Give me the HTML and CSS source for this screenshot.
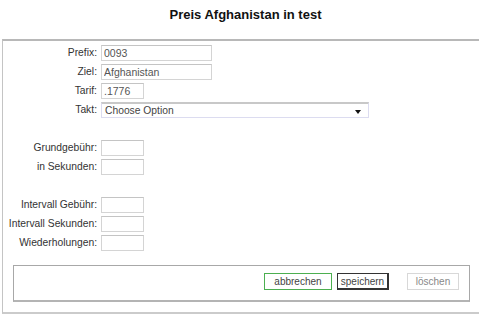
FILE: index.html
```html
<!DOCTYPE html>
<html lang="de">
<head>
    <meta charset="UTF-8">
    <title>Preis Afghanistan in test</title>
    <link rel="stylesheet" href="styles.css">
</head>
<body>

    <h1 class="page-title">Preis Afghanistan in test</h1>

    <!-- Preis Formular -->
    <div class="panel">
        <div class="form-grid">
            <label>Prefix:</label>
            <input class="inp inp-long" type="text" value="0093">
            <label>Ziel:</label>
            <input class="inp inp-long" type="text" value="Afghanistan">
            <label>Tarif:</label>
            <input class="inp inp-short" type="text" value=".1776">
            <label>Takt:</label>
            <div class="select-box">
                <span>Choose Option</span>
                <span class="arrow"></span>
            </div>
        </div>

        <div class="form-grid group">
            <label>Grundgebühr:</label>
            <input class="inp inp-short" type="text">
            <label>in Sekunden:</label>
            <input class="inp inp-short" type="text">
        </div>

        <div class="form-grid group">
            <label>Intervall Gebühr:</label>
            <input class="inp inp-short" type="text">
            <label>Intervall Sekunden:</label>
            <input class="inp inp-short" type="text">
            <label>Wiederholungen:</label>
            <input class="inp inp-short" type="text">
        </div>

        <div class="button-bar">
            <button class="btn btn-cancel">abbrechen</button>
            <button class="btn btn-save">speichern</button>
            <button class="btn btn-delete">löschen</button>
        </div>
    </div>

</body>
</html>
```

FILE: styles.css
```css
/* Styling */
body {
    font-family: "Liberation Sans", Arial, sans-serif;
    font-size: 10.3px;
    color: #333;
    background: #fff;
    margin: 0;
    width: 491px;
}
.page-title {
    font-size: 13px;
    font-weight: bold;
    text-align: center;
    color: #111;
    margin: 0;
    padding-top: 7px;
    height: 39px;
    box-sizing: border-box;
}
.panel {
    margin-left: 2px;
    width: 476px;
    border-top: 2px solid #b8b8b8;
    border-left: 1px solid #c4c4c4;
    border-bottom: 2px solid #cbcbcb;
    padding: 4px 0 10px 0;
}
.form-grid {
    display: grid;
    grid-template-columns: 96px auto;
    column-gap: 2px;
    row-gap: 3px;
    align-items: center;
    justify-items: start;
}
.form-grid label {
    justify-self: end;
    line-height: 16px;
    padding-right: 2px;
}
.group {
    margin-top: 22px;
}
.inp {
    height: 16px;
    box-sizing: border-box;
    border: 1px solid #d4d4d4;
    border-top-color: #c4c4c4;
    padding: 0 2px;
    margin: 0;
    font-family: "Liberation Sans", Arial, sans-serif;
    font-size: 10.5px;
    color: #555;
    background: #fff;
}
.inp-long {
    width: 111px;
}
.inp-short {
    width: 43px;
}
.select-box {
    width: 268px;
    height: 16px;
    box-sizing: border-box;
    border: 1px solid #dcdcf0;
    border-top: 2px solid #c8c8c8;
    display: flex;
    align-items: center;
    justify-content: space-between;
    padding: 0 7px 0 3px;
    color: #444;
}
.arrow {
    width: 0;
    height: 0;
    border-left: 3.5px solid transparent;
    border-right: 3.5px solid transparent;
    border-top: 4px solid #111;
    margin-top: 2px;
}
.button-bar {
    margin: 14px 0 0 10px;
    width: 457px;
    height: 37px;
    box-sizing: border-box;
    border: 1px solid #a8a8a8;
    border-bottom: 2px solid #b4b4b4;
    display: flex;
    justify-content: flex-end;
    align-items: flex-start;
    padding: 7px 10px 0 0;
}
.btn {
    height: 17px;
    padding: 0;
    margin: 0 0 0 5px;
    background: #fff;
    font-family: "Liberation Sans", Arial, sans-serif;
    font-size: 10px;
    color: #444;
    cursor: pointer;
}
.btn-cancel {
    width: 68px;
    border: 1px solid #4caf50;
}
.btn-save {
    width: 52px;
    border: 1px solid #333;
    border-right-width: 2px;
    border-bottom-width: 2px;
}
.btn-delete {
    width: 52px;
    margin-left: 18px;
    border: 1px solid #d8d8d8;
    color: #888;
}
```
